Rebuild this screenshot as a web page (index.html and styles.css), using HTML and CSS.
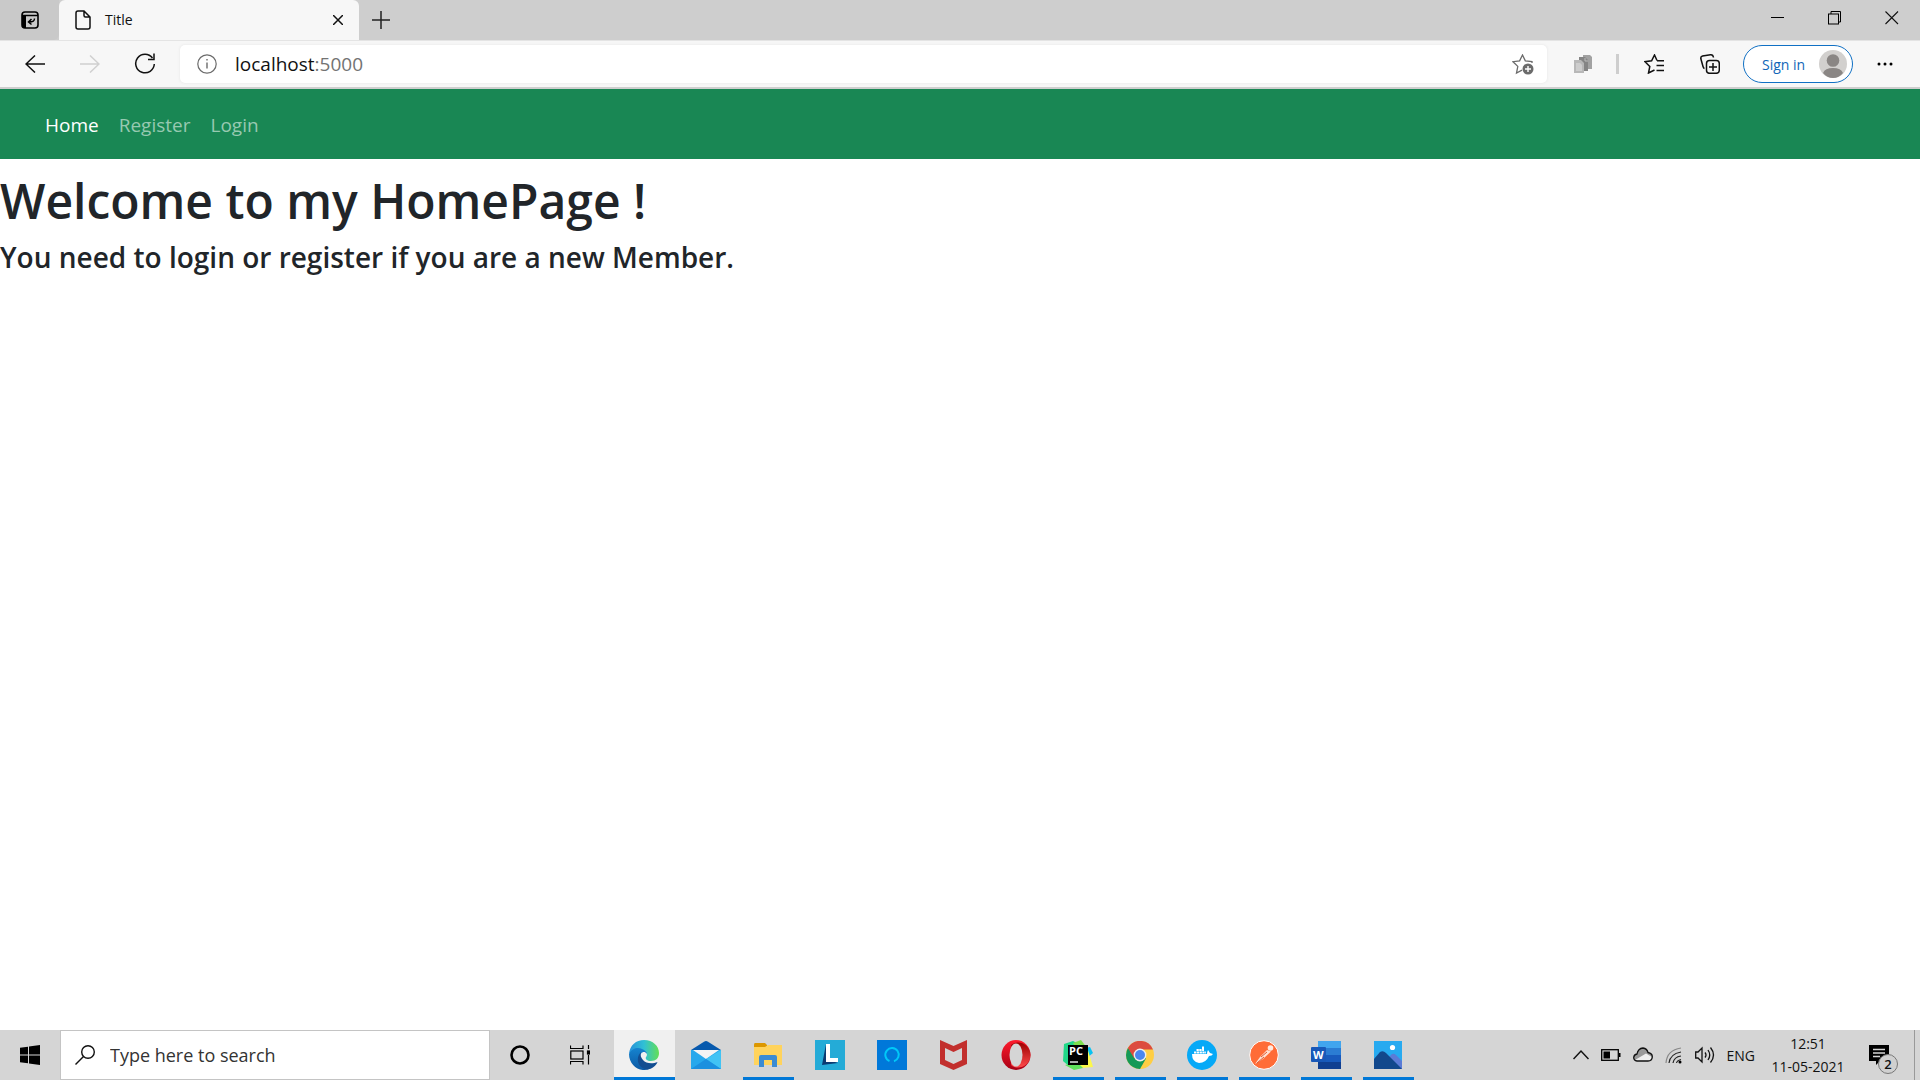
FILE: index.html
```html
<!DOCTYPE html>
<html lang="en">
<head>
<meta charset="utf-8">
<title>Title</title>
<link rel="stylesheet" href="styles.css">
</head>
<body>
<div class="screen">
  <header class="tabstrip">
    <button class="tab-actions" aria-label="Tab actions menu">
      <svg width="18" height="18" viewBox="0 0 18 18"><rect x="1" y="1" width="16" height="16" rx="3" fill="none" stroke="#000" stroke-width="1.6"/><path d="M1 4.500H17" stroke="#000" stroke-width="1.500"/><path d="M1 4H5V17H3L1 15Z"/><path d="M13.500 7.500C13.500 10 12.500 11 8 11M10.500 8L7.500 11L10.500 13.500" fill="none" stroke="#000" stroke-width="1.500"/></svg>
    </button>
    <div class="tab">
      <svg width="16" height="20" viewBox="0 0 16 20" fill="none" stroke="#111" stroke-width="1.500"><path d="M3 1H9L15 7V17Q15 19 13 19H3Q1 19 1 17V3Q1 1 3 1ZM9 1V5.500Q9 7 10.500 7H15"/></svg>
      <span class="tab-title">Title</span>
      <button class="icon-button tab-close" aria-label="Close tab"><svg width="10" height="10" viewBox="0 0 10 10"><path d="M0 0L10 10M10 0L0 10" stroke="#111" stroke-width="1.500"/></svg></button>
    </div>
    <button class="new-tab" aria-label="New tab"><svg width="18" height="18" viewBox="0 0 18 18"><path d="M0 9H18M9 0V18" stroke="#222" stroke-width="1.500"/></svg></button>
    <div class="window-controls">
      <button aria-label="Minimize"><svg width="14" height="14" viewBox="0 0 14 14"><path d="M0 6.500H13" stroke="#000"/></svg></button>
      <button aria-label="Restore"><svg width="14" height="14" viewBox="0 0 14 14" fill="none" stroke="#000"><rect x=".5" y="3" width="10" height="10"/><path d="M3 3V.5H12.500V11H10.500"/></svg></button>
      <button aria-label="Close"><svg width="14" height="14" viewBox="0 0 14 14"><path d="M.5 .5L13 13M13 .5L.5 13" stroke="#111" stroke-width="1.100"/></svg></button>
    </div>
  </header>

  <div class="toolbar">
    <button class="tool" aria-label="Back"><svg width="20" height="18" viewBox="0 0 20 18" fill="none" stroke="#111" stroke-width="1.500"><path d="M20 9H1M10 .5L1 9L10 17.500"/></svg></button>
    <button class="tool" aria-label="Forward"><svg width="20" height="18" viewBox="0 0 20 18" fill="none" stroke="#d0d0d0" stroke-width="1.500"><path d="M0 9H19M10 .5L19 9L10 17.500"/></svg></button>
    <button class="tool" aria-label="Refresh"><svg width="22" height="22" viewBox="0 0 22 22" fill="none" stroke="#111" stroke-width="1.500"><path d="M18.500 5A9.300 9.300 0 1 0 20.300 11M20 .5V6.500H14"/></svg></button>
    <div class="address">
      <svg width="20" height="20" viewBox="0 0 20 20" fill="none" stroke="#6b6b6b" stroke-width="1.200"><circle cx="10" cy="10" r="9.200"/><path d="M10 8.500V14.500M10 5V6.600" stroke-width="1.400"/></svg>
      <a class="url" href="#">localhost<span>:5000</span></a>
      <button class="icon-button" aria-label="Add to favorites"><svg width="22" height="21" viewBox="0 0 22 21"><path d="M20 9V7.500L13.300 6.800L10.500 1L7.600 6.800L1 7.700L5.800 12.400L4.500 19L10 16.200" fill="none" stroke="#6b6b6b" stroke-width="1.300"/><circle cx="16" cy="15" r="5.500" fill="#6b6b6b"/><path d="M13 15H19M16 12V18" stroke="#fff" stroke-width="1.400"/></svg></button>
    </div>
    <button class="tool extension" aria-label="Extension"><svg width="18" height="19" viewBox="0 0 18 19"><path d="M9 0H16L18 2V14H9Z" fill="#a2a2a2"/><path d="M5 2H11L14 5V16H5Z" fill="#858585"/><path d="M11 3V6H14" stroke="#bbb" fill="none"/><path d="M0 5H7L10 8V18H0Z" fill="#b8b8b8"/><path d="M2 8H6L8 10V16H2Z" fill="#cdcdcd"/></svg></button>
    <span class="divider"></span>
    <button class="tool" aria-label="Favorites"><svg width="22" height="20" viewBox="0 0 22 20" fill="none" stroke="#111" stroke-width="1.500"><path d="M13 6.500L10.500 1L7.600 6.800L1 7.700L5.800 12.400L4.500 19L10.500 16M13 6.800H20M12.500 11.500H20M12.500 16.500H20"/></svg></button>
    <button class="tool" aria-label="Collections"><svg width="20" height="20" viewBox="0 0 20 20" fill="none" stroke="#111" stroke-width="1.500"><path d="M4.500 14.500Q3.500 14.300 3 12.500L.8 4.500Q.5 2.500 2.500 2L10.500 .8Q13 .5 13.500 3.500"/><rect x="6.500" y="6.500" width="12.800" height="12.800" rx="3"/><path d="M9 13H17M13 9V17"/></svg></button>
    <button class="sign-in">Sign in
      <svg width="28" height="28" viewBox="0 0 28 28"><circle cx="14" cy="14" r="14" fill="#d2d0ce"/><circle cx="14" cy="10.500" r="6.300" fill="#8a8684"/><path d="M4 23Q6 18 14 18T24 23Q20 28 14 28T4 23Z" fill="#8a8684"/></svg>
    </button>
    <button class="tool" aria-label="Settings and more"><svg width="16" height="4" viewBox="0 0 16 4"><circle cx="2" cy="2" r="1.500"/><circle cx="8" cy="2" r="1.500"/><circle cx="14" cy="2" r="1.500"/></svg></button>
  </div>

  <div class="page">
    <nav class="navbar">
      <a class="active" href="#">Home</a>
      <a href="#">Register</a>
      <a href="#">Login</a>
    </nav>
    <main>
      <h1>Welcome to my HomePage !</h1>
      <h2>You need to login or register if you are a new Member.</h2>
    </main>
  </div>

  <footer class="taskbar">
    <button class="start" aria-label="Start"><svg width="20" height="20" viewBox="0 0 20 20"><path d="M0 2.800L8 1.700V9.500H0ZM9 1.500L20 0V9.500H9ZM0 10.500H8V18.300L0 17.200ZM9 10.500H20V20L9 18.500Z"/></svg></button>
    <label class="search">
      <svg width="20" height="20" viewBox="0 0 20 20" fill="none" stroke="#111" stroke-width="1.400"><circle cx="13" cy="7" r="6.300"/><path d="M8.500 11.500L.5 19.500"/></svg>
      <input type="text" placeholder="Type here to search" aria-label="Search">
    </label>
    <button class="shell" aria-label="Cortana"><svg width="20" height="20" viewBox="0 0 20 20"><circle cx="10" cy="10" r="8.500" fill="none" stroke="#000" stroke-width="2.600"/></svg></button>
    <button class="shell" aria-label="Task View"><svg width="20" height="20" viewBox="0 0 20 20" fill="none" stroke="#000" stroke-width="1.200"><path d="M.5 .5V3.500H13V.5M.5 19.500V16.500H13V19.500M18.500 0V4M18.500 10V19.500"/><rect x=".8" y="6" width="12.200" height="8"/><rect x="17.500" y="6" width="2" height="3" fill="#000"/></svg></button>
    <div class="apps">
      <button class="app current" aria-label="Edge"><svg width="30" height="30" viewBox="0 0 30 30">
        <defs><linearGradient id="e1"><stop stop-color="#258fd9"/><stop offset=".5" stop-color="#30c0d5"/><stop offset="1" stop-color="#64df55"/></linearGradient><linearGradient id="e2" x2="0" y2="1"><stop stop-color="#1583cf"/><stop offset="1" stop-color="#0c59a4"/></linearGradient></defs>
        <path d="M0 14C1 5 7 0 15 0C24 0 30 6 30 13C30 18 27 21 22 21C18 21 16 19 17 17C19 15 18 11 13 10C7 9 2 11 0 14Z" fill="url(#e1)"/><path d="M0 14C3 8 9 7 13 9C16 10 18 12 18 14C15 10 11 13 11 17C11 24 18 29 22 28C12 34 0 26 0 14Z" fill="url(#e2)"/><path d="M12 12C6 18 9 28 18 29.500C23 29 27 26 28.500 22C24 24 17 24 14 20C12 18 11 15 12 12Z" fill="#124d91"/></svg></button>
      <button class="app" aria-label="Mail"><svg width="30" height="28" viewBox="0 0 30 28"><path d="M0 9L13 .7Q15 -.5 17 .7L30 9Z" fill="#0759ad"/><path d="M0 9H30V28H0Z" fill="#27a8ec"/><path d="M2 9H28L15 18Z" fill="#f4f4f4"/><path d="M15 18L30 9V28Z" fill="#41c3f4"/><path d="M0 28L15 18L30 28Z" fill="#1c90df"/></svg></button>
      <button class="app open" aria-label="File Explorer"><svg width="28" height="24" viewBox="0 0 28 24"><path d="M0 2Q0 0 1 0H11L13 2V5H0Z" fill="#dc9700"/><path d="M0 4H11L14 2H28V22H0Z" fill="#ffd35c"/><path d="M5 24V14Q5 12 7 12H21Q23 12 23 14V24H18V17H10V24Z" fill="#3b8bd3"/></svg></button>
      <button class="app" aria-label="Lenovo Vantage"><svg width="30" height="30" viewBox="0 0 30 30"><path fill="#24abd7" d="M0 0H30V30H0Z"/><path d="M11 4L7 25L23 23L11 19Z" fill="#0b3b71"/><path d="M11 4H15V18H23V22H11Z" fill="#fff"/></svg></button>
      <button class="app" aria-label="Alexa"><svg width="30" height="30" viewBox="0 0 30 30"><path fill="#0078d9" d="M0 0H30V30H0Z"/><path d="M12.500 21A6.700 6.700 0 1 1 17 21.200" fill="none" stroke="#00c8f8" stroke-width="2"/></svg></button>
      <button class="app" aria-label="McAfee"><svg width="27" height="30" viewBox="0 0 27 30"><path d="M0 0L13.500 6L27 0V24L13.500 30L0 24ZM5 8V20L13.500 24L22 20V8L13.500 12Z" fill="#c22f2d"/></svg></button>
      <button class="app" aria-label="Opera"><svg width="30" height="30" viewBox="0 0 30 30"><defs><linearGradient id="o1" x2="0" y2="1"><stop stop-color="#ff1b2d"/><stop offset="1" stop-color="#a70014"/></linearGradient><linearGradient id="o2" x2="0" y2="1"><stop stop-color="#9c0000"/><stop offset="1" stop-color="#ff4b4b"/></linearGradient></defs><ellipse cx="15" cy="15" rx="14.500" ry="15" fill="url(#o1)"/><path d="M10 5C17 -1 29 4 29.500 15C29 26 17 31 10 25Z" fill="url(#o2)"/><ellipse cx="15" cy="15" rx="6.500" ry="11.500" fill="#d5d5d5"/></svg></button>
      <button class="app open" aria-label="PyCharm"><svg width="30" height="30" viewBox="0 0 30 30"><path d="M1 4L10 1L20 6L8 28L0 21Z" fill="#21d789"/><path d="M10 3L18 0L24 8L16 14Z" fill="#7ee04d"/><path d="M23 8L27 7L30 13L25 17Z" fill="#07c3f2"/><path d="M24 7L30 27L18 28L14 24Z" fill="#fcf84a"/><path d="M2 25L14 22L20 28L11 30Z" fill="#5fe05c"/><path d="M5 5H25V25H5Z"/><path d="M7 21H15V23H7Z" fill="#aaa"/><text x="6" y="15" class="pc">PC</text></svg></button>
      <button class="app open" aria-label="Chrome"><svg width="28" height="28" viewBox="0 0 28 28"><circle cx="14" cy="14" r="14" fill="#ffce43"/><path d="M1.900 7A14 14 0 0 0 14 28L20 17.500L14 14Z" fill="#159957"/><path d="M1.900 7A14 14 0 0 1 27 8.500H14V14L8 17Z" fill="#dc4b3f"/><circle cx="14" cy="14" r="6.400" fill="#eee"/><circle cx="14" cy="14" r="5" fill="#4a87ee"/></svg></button>
      <button class="app open" aria-label="Docker"><svg width="30" height="30" viewBox="0 0 30 30"><circle cx="15" cy="15" r="15" fill="#06a9f7"/><path d="M5 14H20Q20 12 21 10L23 13L26 14Q25 16 22 16Q19 23 12 23Q5 22 5 14Z" fill="#fff"/><path d="M7 12.500H19M9.500 10H17" stroke="#fff" stroke-width="2.200" stroke-dasharray="2.300 .5"/><path d="M15 6.500H17V9H15Z" fill="#fff"/></svg></button>
      <button class="app open" aria-label="Postman"><svg width="30" height="30" viewBox="0 0 30 30"><circle cx="15" cy="15" r="14.300" fill="#ff6c37" stroke="#fff"/><circle cx="21.500" cy="8" r="2.800" fill="#ffe9df"/><path d="M18 10L22 11.500L14 19L6 24L11 17Z" fill="#ffe0d2"/><path d="M12 17L18 12M8 23L15 17" stroke="#df5a34"/></svg></button>
      <button class="app open" aria-label="Word"><svg width="30" height="28" viewBox="0 0 30 28"><path fill="#41a5ee" d="M7 0H30V7H7Z"/><path fill="#2b7cd3" d="M7 7H30V14H7Z"/><path fill="#185abd" d="M7 14H30V21H7Z"/><path fill="#103f91" d="M7 21H30V28H7Z"/><rect y="6" width="15" height="15" rx="1" fill="#1858b8"/><text x="2" y="18" class="word">W</text></svg></button>
      <button class="app open" aria-label="Photos"><svg width="28" height="28" viewBox="0 0 28 28"><path fill="#27aaf0" d="M0 0H28V28H0Z"/><path d="M14 17L18 13Q20 12 22 14L28 20V28H20Z" fill="#5b7bd6"/><path d="M0 18L6 11Q9 9 12 12L28 28H0Z" fill="#12488c"/><circle cx="18.500" cy="6.500" r="2.600" fill="#fff"/></svg></button>
    </div>
    <div class="tray">
      <button class="icon-button" aria-label="Show hidden icons"><svg width="16" height="20" viewBox="0 0 16 20"><path d="M.5 14L8 6L15.500 14" fill="none" stroke="#111" stroke-width="1.500"/></svg></button>
      <svg width="20" height="12" viewBox="0 0 20 12"><rect x=".7" y=".7" width="16.600" height="10.600" fill="none" stroke="#000" stroke-width="1.300"/><path d="M2.500 2.500H9V9.500H2.500ZM18 4H19.500V8H18Z"/></svg>
      <svg width="20" height="20" viewBox="0 0 20 20"><path d="M4 16Q.7 15.500 .7 12.500Q1 9.500 4 9Q5 3.500 10 3Q14 3.500 15 7.500Q19.500 8.500 19.300 12Q19 16 15 16Z" fill="#999"/><path d="M2 15L13 8.500L19 12Q18 16 15 16H4Z" fill="#eee"/><path d="M4 16Q.7 15.500 .7 12.500Q1 9.500 4 9Q5 3.500 10 3Q14 3.500 15 7.500Q19.500 8.500 19.300 12Q19 16 15 16Z" fill="none" stroke="#111" stroke-width="1.300"/></svg>
      <svg width="18" height="18" viewBox="0 0 18 18" fill="none" stroke="#222" stroke-width="1.200"><path d="M1 17Q2 4 16 2" stroke="#888"/><path d="M4 17Q5 8 16 6M8 17Q9 11 16 10M11.500 17Q12 14.500 16 13.500"/><circle cx="15" cy="16" r="1.500" fill="#000" stroke="none"/></svg>
      <svg width="20" height="20" viewBox="0 0 20 20" fill="none" stroke="#111" stroke-width="1.300"><path d="M.7 7H3L7 3V17L3 13H.7ZM10 7.500Q12 10 10 12.500M13 5Q16.500 10 13 15M15.500 2.500Q21.500 10 15.500 17.500"/></svg>
      <span class="lang">ENG</span>
      <time class="clock"><span>12:51</span><span>11-05-2021</span></time>
      <button class="notify" aria-label="Notifications"><svg width="20" height="20" viewBox="0 0 20 20"><path d="M0 0H20V16H11L7 20V16H0Z"/><path d="M4 4.500H16M4 8H16M4 11.500H11" stroke="#d5d5d5" stroke-width="1.400"/></svg><span class="badge">2</span></button>
      <span class="desktop-edge"></span>
    </div>
  </footer>
</div>
</body>
</html>
```
FILE: styles.css
```css
* { box-sizing: border-box; }
body { margin: 0; font-family: "Open Sans", "Noto Sans", sans-serif; color: #212529; background: #fff; }
button { padding: 0; border: 0; background: none; font: inherit; color: inherit; display: flex; align-items: center; justify-content: center; }
svg { display: block; flex: none; }
a { text-decoration: none; color: inherit; }
.screen { min-height: 100vh; display: flex; flex-direction: column; }

.tabstrip { display: flex; height: 40px; background: #cecece; }
.tab-actions { width: 59px; border-bottom-right-radius: 6px; background: #c9c9c9; }
.tab { display: flex; align-items: center; width: 300px; padding: 0 16px; background: #f7f7f7; border-radius: 6px 6px 0 0; }
.tab-title { flex: 1; margin-left: 14px; font-size: 14px; line-height: 20px; color: #111; }
.new-tab { width: 44px; }
.window-controls { display: flex; margin-left: auto; }
.window-controls button { width: 57px; padding-bottom: 4px; }

.toolbar { display: flex; align-items: center; height: 49px; padding: 0 8px 0 7px; background: #f7f7f7; border-top: 1px solid #e4e4e4; border-bottom: 2px solid #cecece; }
.tool { width: 55px; height: 40px; }
.address { display: flex; flex: 1; align-items: center; height: 38px; margin: 0 8px; padding: 0 13px 0 17px; background: #fff; border-radius: 5px; box-shadow: 0 0 3px #e4e4e4; }
.url { flex: 1; margin-left: 18px; font-size: 19px; line-height: 24px; color: #111; }
.url span { color: #737373; }
.divider { width: 3px; height: 20px; margin: 0 8px 0 6px; background: #cecece; }
.sign-in { width: 110px; height: 38px; justify-content: space-between; padding: 0 5px 0 18px; margin: 0 4px 0 6px; font-size: 14px; color: #0f66b8; background: #fff; border: 1px solid #1070c4; border-radius: 19px; }

.page { flex: 1; }
.navbar { display: flex; gap: 20px; align-items: center; height: 70px; padding: 2px 45px 0; background: #198754; font-size: 19px; line-height: 30px; color: #97c9b1; }
.navbar .active { color: #fff; }
h1, h2 { margin: 0; font-weight: 600; }
h1 { padding-top: 12px; font-size: 48px; line-height: 60px; }
h2 { padding-top: 8px; font-size: 28px; line-height: 36px; }

.taskbar { display: flex; height: 50px; background: #d5d5d5; color: #111; }
.start { width: 60px; }
.search { display: flex; align-items: center; width: 430px; padding: 0 14px; background: #fff; border: 1px solid #c4c4c4; }
.search input { flex: 1; min-width: 0; margin-left: 15px; padding: 0; border: 0; outline: 0; font: 18px/24px "Open Sans", "Noto Sans", sans-serif; }
.search input::placeholder { color: #333; opacity: 1; }
.shell { width: 60px; }
.apps { display: flex; gap: 1px; margin-left: 4px; }
.app { position: relative; width: 61px; padding-right: 2px; }
.current { background: #f0f0f0; }
.current::after, .open::after { content: ""; position: absolute; right: 5px; bottom: 0; left: 5px; height: 3px; background: #0078d7; }
.current::after { right: 0; left: 0; }
.pc, .word { font-weight: 700; font-size: 11px; fill: #fff; }
.tray { display: flex; align-items: center; gap: 12px; margin-left: auto; font-size: 14px; }
.clock { display: flex; flex-direction: column; align-items: center; width: 82px; line-height: 23px; }
.notify { position: relative; width: 20px; margin: 0 13px 0 8px; }
.badge { position: absolute; top: 9px; left: 9px; width: 20px; height: 20px; font-size: 13px; font-weight: 600; line-height: 18px; background: #d0d0d0; border: 1px solid #777; border-radius: 10px; }
.desktop-edge { align-self: stretch; width: 6px; border-left: 1px solid #999; }
```
